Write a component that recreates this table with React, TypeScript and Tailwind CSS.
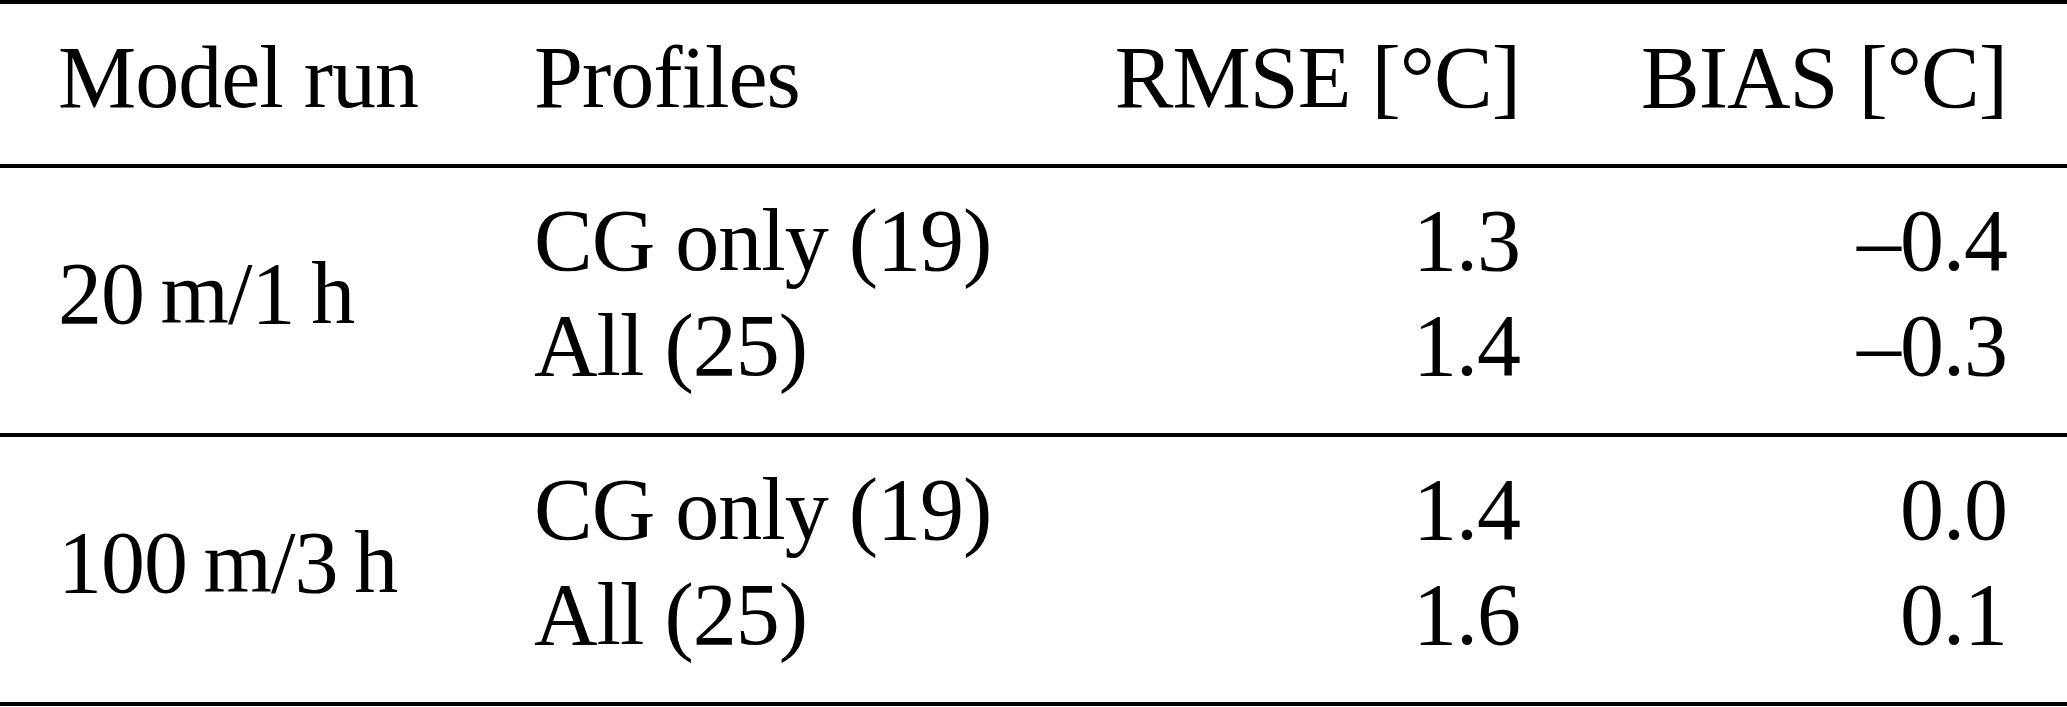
const cols = "grid grid-cols-[476px_466px_520px_487px] pl-[58px] pr-[60px]"

const groups = [
  {
    run: "20\u2009m/1\u2009h",
    rows: [
      ["CG only (19)", "1.3", "\u20130.4"],
      ["All (25)", "1.4", "\u20130.3"],
    ],
  },
  {
    run: "100\u2009m/3\u2009h",
    rows: [
      ["CG only (19)", "1.4", "0.0"],
      ["All (25)", "1.6", "0.1"],
    ],
  },
]

export default function App() {
  return (
    <div className="w-[2067px] h-[707px] overflow-hidden bg-white text-black whitespace-nowrap font-['Liberation_Serif','Times_New_Roman',serif] text-[88px] leading-[105px] tracking-[-1px]">
      <div className="h-[4px] bg-black" />

      {/* Header */}
      <div className={`${cols} pt-[21px] pb-[34px]`}>
        <div>Model run</div>
        <div>Profiles</div>
        <div className="text-right">RMSE [°C]</div>
        <div className="text-right">BIAS [°C]</div>
      </div>
      <div className="h-[4px] bg-black" />

      {groups.map((g, i) => (
        <div key={i}>
          <div className={`${cols} grid-rows-[105px_105px] pt-[20px] pb-[35px]`}>
            <div className="row-span-2 self-center">{g.run}</div>
            {g.rows.map((r, j) => (
              <div key={j} className="contents">
                <div className="col-start-2">{r[0]}</div>
                <div className="text-right">{r[1]}</div>
                <div className="text-right">{r[2]}</div>
              </div>
            ))}
          </div>
          <div className="h-[4px] bg-black" />
        </div>
      ))}
    </div>
  )
}
